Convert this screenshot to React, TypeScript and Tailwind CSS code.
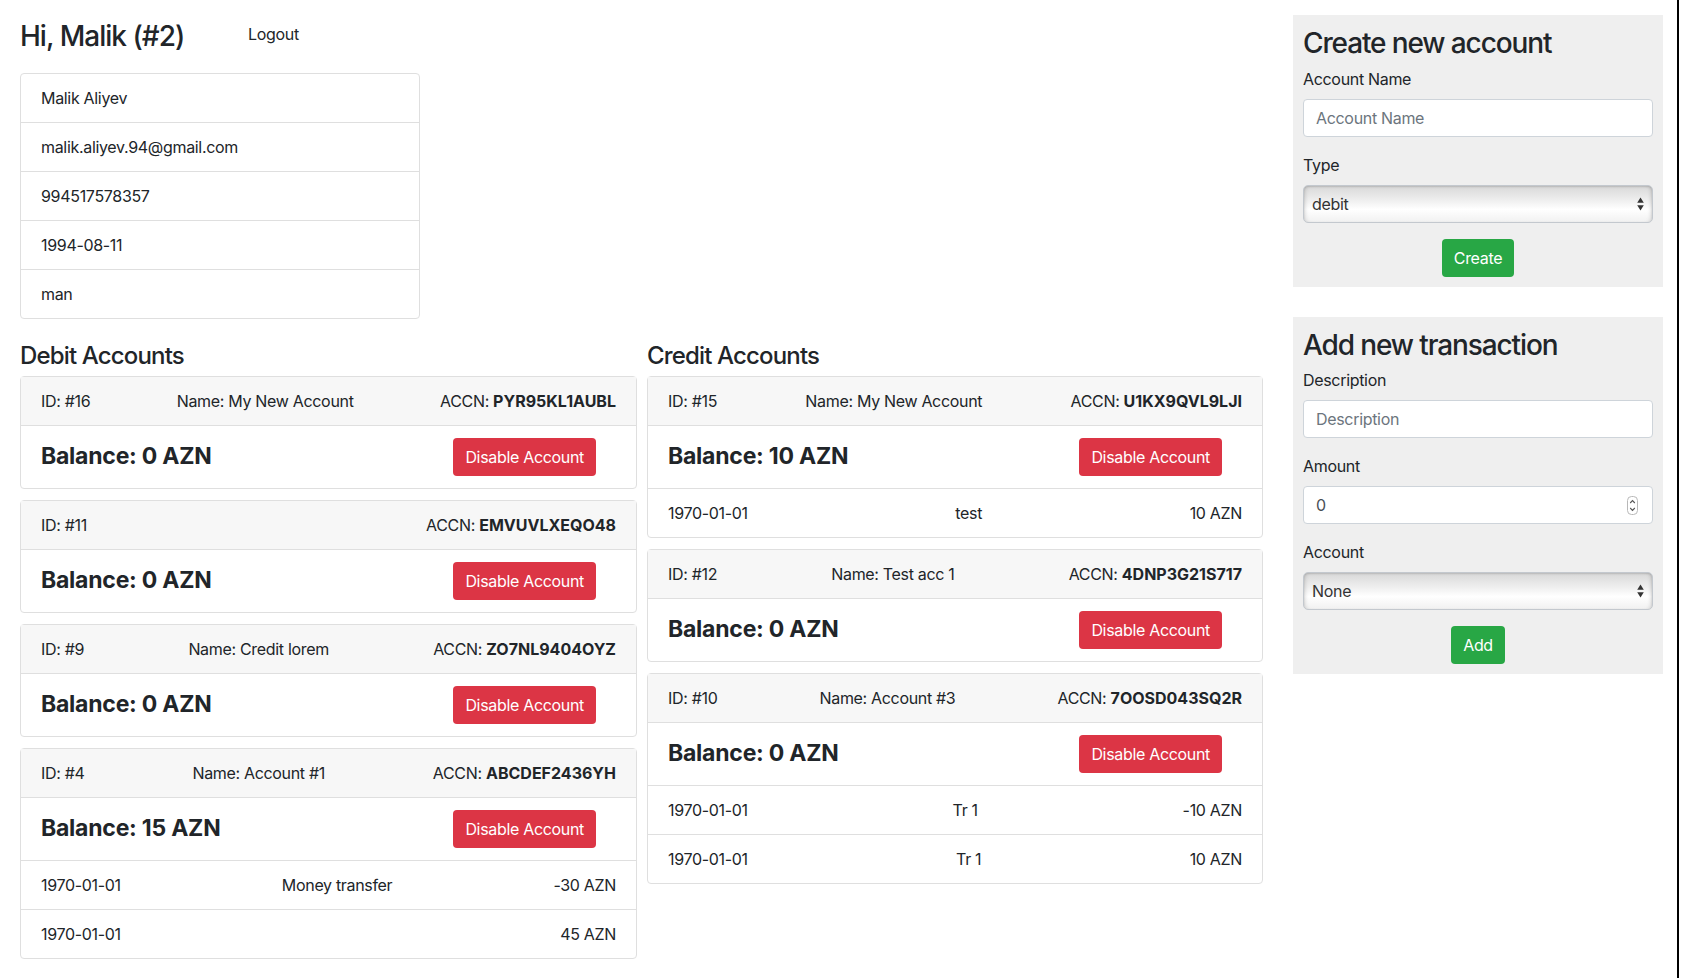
import React from 'react'

type Tx = [string, string, string]
type Account = { id: number; name?: string; accn: string; balance: number; tx?: Tx[] }

const profile = ['Malik Aliyev', 'malik.aliyev.94@gmail.com', '994517578357', '1994-08-11', 'man']

const debit: Account[] = [
  { id: 16, name: 'My New Account', accn: 'PYR95KL1AUBL', balance: 0 },
  { id: 11, accn: 'EMVUVLXEQO48', balance: 0 },
  { id: 9, name: 'Credit lorem', accn: 'ZO7NL9404OYZ', balance: 0 },
  {
    id: 4, name: 'Account #1', accn: 'ABCDEF2436YH', balance: 15,
    tx: [['1970-01-01', 'Money transfer', '-30 AZN'], ['1970-01-01', '', '45 AZN']],
  },
]

const credit: Account[] = [
  { id: 15, name: 'My New Account', accn: 'U1KX9QVL9LJI', balance: 10, tx: [['1970-01-01', 'test', '10 AZN']] },
  { id: 12, name: 'Test acc 1', accn: '4DNP3G21S717', balance: 0 },
  {
    id: 10, name: 'Account #3', accn: '7OOSD043SQ2R', balance: 0,
    tx: [['1970-01-01', 'Tr 1', '-10 AZN'], ['1970-01-01', 'Tr 1', '10 AZN']],
  },
]

function AccountCard({ acc }: { acc: Account }) {
  return (
    <div className="mb-[11px] rounded border border-[#dfdfdf] bg-white">
      <div className="flex items-center justify-between border-b border-[#dfdfdf] bg-[#f7f7f7] px-5 py-3">
        <span>ID: #{acc.id}</span>
        <span>{acc.name ? `Name: ${acc.name}` : ''}</span>
        <span>
          ACCN: <b className="font-bold tracking-normal">{acc.accn}</b>
        </span>
      </div>
      <div className="flex items-center justify-between px-5 py-3">
        <span className="text-[23px] font-bold leading-[1.2] tracking-[-0.01em]">Balance: {acc.balance} AZN</span>
        <button className="mr-5 h-[38px] rounded bg-[#dc3545] px-3 text-white">Disable Account</button>
      </div>
      {acc.tx?.map((t, i) => (
        <div key={i} className="flex items-center justify-between border-t border-[#dfdfdf] px-5 py-3">
          <span>{t[0]}</span>
          <span>{t[1]}</span>
          <span>{t[2]}</span>
        </div>
      ))}
    </div>
  )
}

function Arrows() {
  return (
    <svg width="7" height="14" viewBox="0 0 7 14" className="shrink-0">
      <path d="M3.5 0.5 L6.8 5.8 L0.2 5.8 Z" fill="#333" />
      <path d="M0.2 8.2 L6.8 8.2 L3.5 13.5 Z" fill="#333" />
    </svg>
  )
}

function FakeSelect({ value }: { value: string }) {
  return (
    <div className="flex h-[38px] items-center justify-between rounded-[5px] border border-[#c3c8ce] bg-[linear-gradient(to_bottom,#d8d8d8,#efefef_40%,#ffffff_65%,#f1f1f1)] pl-2 pr-[8px] shadow-[inset_0_1px_2px_rgba(0,0,0,0.15),inset_4px_0_4px_-3px_rgba(0,0,0,0.14),inset_-4px_0_4px_-3px_rgba(0,0,0,0.14)]">
      <span className="text-[#333]">{value}</span>
      <Arrows />
    </div>
  )
}

function Panel({ title, children }: { title: string; children: React.ReactNode }) {
  return (
    <div className="bg-[#efefef] p-[10px]">
      <h3 className="mb-[6px] pt-[2px] text-[28px] font-medium leading-[1.2] tracking-[-0.04em]">{title}</h3>
      {children}
    </div>
  )
}

function Label({ children }: { children: React.ReactNode }) {
  return <div className="mb-2 leading-6">{children}</div>
}

export default function App() {
  return (
    <div className="flex min-h-screen bg-white font-['Inter',sans-serif] text-base leading-6 tracking-[-0.02em] text-[#212529]">
      <div className="flex pl-[20px] pt-[15px]">
        {/* Left side */}
        <div className="w-[1243px]">
          <div className="flex h-[38px] items-center">
            <h3 className="w-[216px] pt-[5px] text-[28px] font-medium leading-[1.2] tracking-[-0.035em]">Hi, Malik (#2)</h3>
            <button className="h-[38px] px-3">Logout</button>
          </div>

          <div className="mt-[20px] w-[400px] overflow-hidden rounded border border-[#dfdfdf]">
            {profile.map((p, i) => (
              <div key={p} className={`px-5 py-3 ${i > 0 ? 'border-t border-[#dfdfdf]' : ''}`}>
                {p}
              </div>
            ))}
          </div>

          <div className="mt-[21px] grid grid-cols-[617px_616px] gap-[10px]">
            <div>
              <h4 className="mb-[5px] pt-[2px] text-[24px] font-medium leading-[1.2] tracking-[-0.035em]">Debit Accounts</h4>
              {debit.map((a) => (
                <AccountCard key={a.id} acc={a} />
              ))}
            </div>
            <div>
              <h4 className="mb-[5px] pt-[2px] text-[24px] font-medium leading-[1.2] tracking-[-0.035em]">Credit Accounts</h4>
              {credit.map((a) => (
                <AccountCard key={a.id} acc={a} />
              ))}
            </div>
          </div>
        </div>

        {/* Right side forms */}
        <div className="ml-[30px] flex w-[370px] flex-col gap-[30px] self-start">
          <Panel title="Create new account">
            <Label>Account Name</Label>
            <input
              className="mb-4 block h-[38px] w-full rounded border border-[#ced4da] bg-white px-3 placeholder:text-[#6c757d]"
              placeholder="Account Name"
              readOnly
            />
            <Label>Type</Label>
            <div className="mb-4">
              <FakeSelect value="debit" />
            </div>
            <div className="flex justify-center">
              <button className="h-[38px] rounded bg-[#28a745] px-3 text-white">Create</button>
            </div>
          </Panel>

          <Panel title="Add new transaction">
            <Label>Description</Label>
            <input
              className="mb-4 block h-[38px] w-full rounded border border-[#ced4da] bg-white px-3 placeholder:text-[#6c757d]"
              placeholder="Description"
              readOnly
            />
            <Label>Amount</Label>
            <div className="mb-4 flex h-[38px] items-center justify-between rounded border border-[#ced4da] bg-white pl-3 pr-[14px]">
              <span className="text-[#495057]">0</span>
              <svg width="11" height="19" viewBox="0 0 11 19">
                <rect x="0.5" y="0.5" width="10" height="18" rx="4" fill="none" stroke="#b8b8b8" />
                <path d="M3.2 7 L5.5 4.6 L7.8 7" fill="none" stroke="#555" strokeWidth="1.1" />
                <path d="M3.2 12 L5.5 14.4 L7.8 12" fill="none" stroke="#555" strokeWidth="1.1" />
              </svg>
            </div>
            <Label>Account</Label>
            <div className="mb-4">
              <FakeSelect value="None" />
            </div>
            <div className="flex justify-center">
              <button className="h-[38px] rounded bg-[#28a745] px-3 text-white">Add</button>
            </div>
          </Panel>
        </div>
      </div>
      <div className="ml-[14px] w-[2px] bg-black" />
    </div>
  )
}
